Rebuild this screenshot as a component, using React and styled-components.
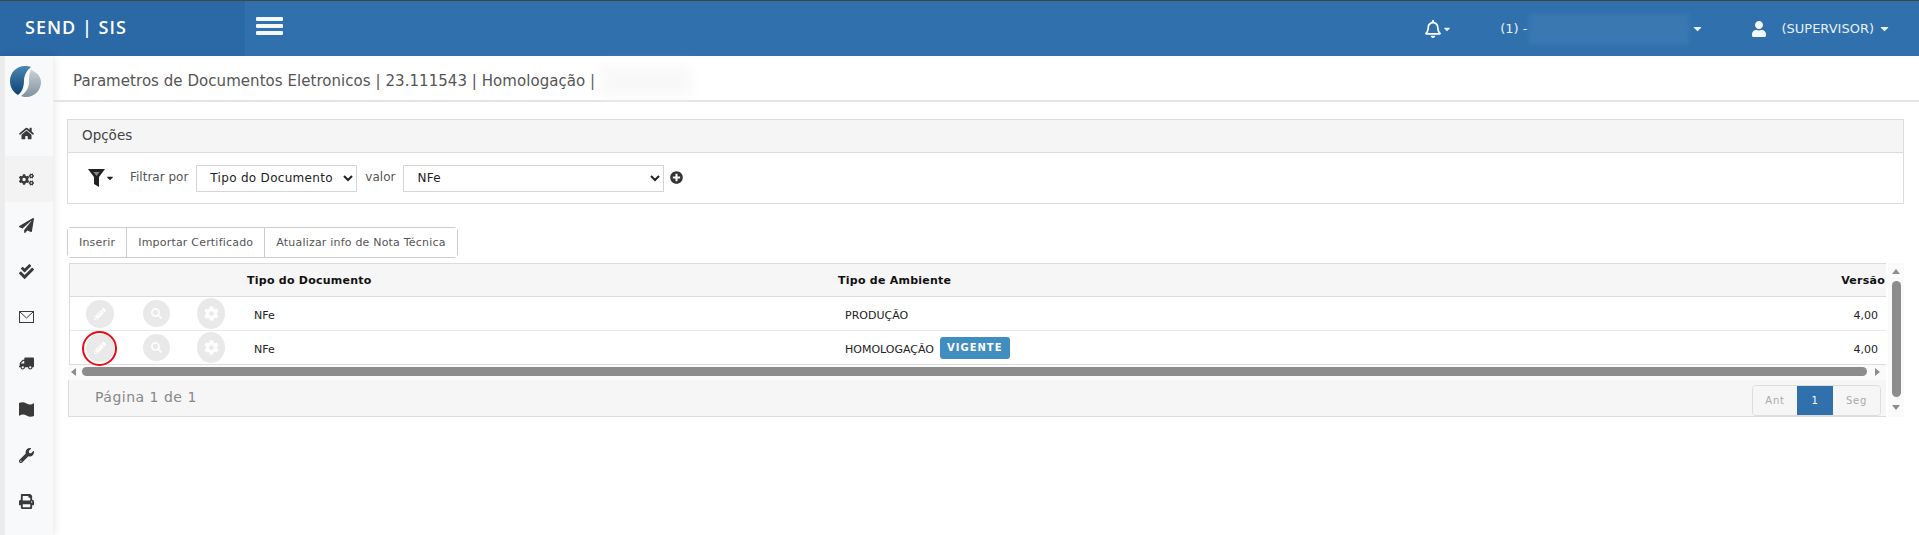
import styled, { createGlobalStyle } from "styled-components";
import {
  FaCaretDown, FaCog, FaCogs, FaHome, FaPaperPlane, FaPencilAlt,
  FaPlusCircle, FaPrint, FaRegBell, FaSearch, FaTruck, FaUser, FaWrench, FaCheckDouble,
} from "react-icons/fa";

const mainBlue = "#3071ad";
const lineColor = "#dcdcdc";
const font = `"DejaVu Sans", "Open Sans", sans-serif`;

const GlobalStyle = createGlobalStyle`
  html, body { margin: 0; height: 535px; overflow: hidden; background: #fff; }
  body { font-family: ${font}; color: #333; }
  * { box-sizing: border-box; }
`;

const Page = styled.div`
  width: 1919px;
  height: 535px;
  display: flex;
  flex-direction: column;
  border-top: 1px solid #444;
`;

const TopBar = styled.header`
  height: 55px;
  flex: none;
  display: flex;
  align-items: center;
  background: ${mainBlue};
  color: #fff;
`;

const Brand = styled.div`
  width: 245px;
  height: 100%;
  padding: 0 0 3px 25px;
  display: flex;
  align-items: center;
  background: #2a69a5;
  font-family: "Open Sans", sans-serif;
  font-size: 18px;
  font-weight: 600;
  letter-spacing: 1px;
  white-space: pre;
`;

const MenuButton = styled.div`
  width: 27px;
  height: 18px;
  margin: 0 0 5px 11px;
  display: flex;
  flex-direction: column;
  justify-content: space-between;
  span { height: 4px; background: #f4f7fb; border-radius: 1px; }
`;

const TopRight = styled.div`
  margin-left: auto;
  display: flex;
  align-items: center;
  font-size: 13px;
  color: #e8eff7;
`;

const TopItem = styled.div`
  display: flex;
  align-items: center;
  margin-left: ${(p) => p.$gap || 0}px;
  margin-right: ${(p) => p.$right || 0}px;
`;

const BlurPatch = styled.div`
  width: ${(p) => p.$w}px;
  height: ${(p) => p.$h}px;
  margin: 0 ${(p) => p.$after}px 0 ${(p) => p.$before}px;
  background: ${(p) => p.$bg};
  filter: blur(2px);
`;

const Caret = styled(FaCaretDown)`
  font-size: ${(p) => p.$size || 13}px;
  margin-left: ${(p) => p.$gap || 0}px;
`;

const RoleLabel = styled.span`
  margin-left: 14px;
`;

const Body = styled.div`
  flex: 1;
  min-height: 0;
  display: flex;
`;

const Sidebar = styled.nav`
  width: 53px;
  flex: none;
  border-left: 5px solid #ececec;
  background: #f8f9fb;
  box-shadow: 2px 0 8px rgba(0, 0, 0, 0.09);
`;

const LogoBox = styled.div`
  height: 54px;
  padding: 10px 7px 0 0;
  display: flex;
  justify-content: center;
`;

const SideItem = styled.div`
  height: 46px;
  padding-right: 6px;
  display: flex;
  align-items: center;
  justify-content: center;
  font-size: 15px;
  color: #3a3a3a;
  background: ${(p) => (p.$active ? "#f3f3f3" : "transparent")};
  svg.flip { transform: scaleX(-1); }
`;

const Main = styled.main`
  flex: 1;
  min-width: 0;
`;

const TitleBar = styled.div`
  height: 46px;
  padding: 6px 0 0 20px;
  display: flex;
  align-items: center;
  border-bottom: 2px solid #e4e4e4;
  font-size: 15px;
  letter-spacing: 0.05px;
  color: #555;
  white-space: nowrap;
`;

const TitlePatch = styled.div`
  width: 90px;
  height: 30px;
  margin-left: 6px;
  background: #f8f8f8;
  filter: blur(6px);
`;

const Content = styled.div`
  padding: 17px 15px 0 14px;
`;

const OptionsPanel = styled.section`
  height: 85px;
  border: 1px solid ${lineColor};
`;

const OptionsTitle = styled.div`
  height: 33px;
  padding: 0 0 2px 14px;
  display: flex;
  align-items: center;
  background: #f5f5f5;
  border-bottom: 1px solid ${lineColor};
  font-size: 13.5px;
  color: #444;
`;

const FilterRow = styled.div`
  height: 50px;
  padding: 0 0 1px 20px;
  display: flex;
  align-items: center;
  font-size: 12px;
  color: #555;
`;

const FilterIcon = styled.div`
  display: flex;
  align-items: center;
  width: 34px;
  color: #222;
`;

const FieldLabel = styled.span`
  margin: 0 8px;
  padding-bottom: 2px;
`;

const Select = styled.select`
  width: ${(p) => p.$w}px;
  height: 27px;
  margin-top: 1px;
  padding-left: 9px;
  background: #fff;
  border: 1px solid #d4d4d4;
  border-radius: 0;
  font-family: ${font};
  font-size: 12px;
  letter-spacing: 0.3px;
  color: #222;
`;

const AddIcon = styled(FaPlusCircle)`
  margin-left: 6px;
  font-size: 13px;
  color: #333;
`;

const ButtonGroup = styled.div`
  width: max-content;
  height: 31px;
  margin-top: 23px;
  display: flex;
  border: 1px solid #ccc;
  border-radius: 4px;
`;

const GroupButton = styled.button`
  padding: 0 ${(p) => p.$pad}px;
  border: none;
  border-left: ${(p) => (p.$first ? "none" : "1px solid #ccc")};
  background: #fff;
  font-family: ${font};
  font-size: 11px;
  letter-spacing: 0.2px;
  color: #555;
`;

const GridArea = styled.div`
  margin-top: 5px;
  display: flex;
`;

const GridLeft = styled.div`
  flex: 1;
  min-width: 0;
`;

const Table = styled.div`
  margin-left: 2px;
  border: 1px solid ${lineColor};
  border-right: none;
  border-bottom: none;
`;

const Row = styled.div`
  height: ${(p) => (p.$head ? 33 : 34)}px;
  display: grid;
  grid-template-columns: 164px 604px 1fr 200px;
  align-items: center;
  background: ${(p) => (p.$head ? "#f6f6f6" : "#fff")};
  border-bottom: 1px solid ${(p) => (p.$last || p.$head ? "#dcdcdc" : "#e8e8e8")};
  font-size: 11px;
  font-weight: ${(p) => (p.$head ? 700 : 400)};
  letter-spacing: ${(p) => (p.$head ? 0.25 : 0)}px;
  color: ${(p) => (p.$head ? "#111" : "#222")};
`;

const RowActions = styled.div`
  position: relative;
  height: 100%;
  display: flex;
  align-items: center;
  padding-left: 16px;
`;

const ActionIcon = styled.span`
  width: ${(p) => p.$size}px;
  height: ${(p) => p.$size + (p.$tall ? 3 : 0)}px;
  margin-right: ${(p) => p.$after}px;
  display: flex;
  align-items: center;
  justify-content: center;
  border-radius: 50%;
  background: #e9e9e9;
  color: #fdfdfd;
  font-size: ${(p) => p.$icon}px;
`;

const RedRing = styled.span`
  position: absolute;
  left: 12px;
  top: 0;
  width: 35px;
  height: 35px;
  border: 2px solid #ee0a12;
  border-radius: 50%;
`;

const Cell = styled.div`
  display: flex;
  align-items: center;
  padding-left: ${(p) => p.$pad || 0}px;
  padding-right: ${(p) => p.$padRight || 0}px;
  padding-top: ${(p) => (p.$body ? 4 : 0)}px;
  justify-content: ${(p) => (p.$right ? "flex-end" : "flex-start")};
  white-space: nowrap;
`;

const Badge = styled.span`
  height: 22px;
  margin: -4px 0 0 6px;
  padding: 0 7px;
  display: inline-flex;
  align-items: center;
  background: #3f8ebf;
  border-radius: 3px;
  color: #fff;
  font-size: 10px;
  font-weight: 700;
  letter-spacing: 1px;
`;

const HScroll = styled.div`
  height: 15px;
  margin-left: 1px;
  padding-bottom: 2px;
  display: flex;
  align-items: center;
  background: #fafafa;
`;

const ScrollTrack = styled.div`
  flex: 1;
  height: 9px;
  margin: 0 8px 0 6px;
  background: #8c8c8c;
  border-radius: 5px;
`;

const Arrow = styled.span`
  width: 0;
  height: 0;
  flex: none;
  margin-left: ${(p) => p.$left || 0}px;
  margin-right: ${(p) => p.$right || 0}px;
  border-top: 4px solid transparent;
  border-bottom: 4px solid transparent;
  border-right: ${(p) => (p.$dir === "left" ? "5px solid #8c8c8c" : "none")};
  border-left: ${(p) => (p.$dir === "right" ? "5px solid #8c8c8c" : "none")};
`;

const Footer = styled.div`
  height: 37px;
  padding: 0 5px 0 26px;
  margin-left: 1px;
  display: flex;
  justify-content: space-between;
  background: #f6f6f6;
  border: 1px solid ${lineColor};
  border-top: none;
  border-right: none;
  font-size: 14px;
  letter-spacing: 0.5px;
  color: #888;
`;

const PageInfo = styled.span`
  padding-top: 9px;
`;

const Pager = styled.div`
  height: 31px;
  margin-top: 5px;
  display: flex;
  border: 1px solid #ddd;
  border-radius: 4px;
  overflow: hidden;
  font-size: 10px;
  letter-spacing: 0.8px;
`;

const PageLink = styled.span`
  width: ${(p) => p.$w}px;
  display: flex;
  align-items: center;
  justify-content: center;
  background: ${(p) => (p.$on ? mainBlue : "#f6f6f6")};
  color: ${(p) => (p.$on ? "#fff" : "#aaa")};
`;

const VScroll = styled.div`
  width: 16px;
  flex: none;
  height: 154px;
  margin-left: 2px;
  padding: 6px 0 7px;
  display: flex;
  flex-direction: column;
  align-items: center;
  justify-content: space-between;
  background: #fafafa;
`;

const VThumb = styled.div`
  width: 9px;
  flex: 1;
  margin: 7px 0 8px;
  background: #8c8c8c;
  border-radius: 5px;
`;

const VArrow = styled.span`
  width: 0;
  height: 0;
  border-left: 4px solid transparent;
  border-right: 4px solid transparent;
  border-bottom: ${(p) => (p.$up ? "5px solid #8c8c8c" : "none")};
  border-top: ${(p) => (p.$up ? "none" : "5px solid #8c8c8c")};
`;

const rows = [
  { ambiente: "PRODUÇÃO" },
  { ambiente: "HOMOLOGAÇÃO", vigente: true },
];

const Logo = () => (
  <svg width="31" height="31" viewBox="0 0 31 31">
    <defs>
      <linearGradient id="lb" x1="0" y1="0" x2="0" y2="1">
        <stop offset="0" stopColor="#4a86b5" />
        <stop offset="1" stopColor="#0c426f" />
      </linearGradient>
      <linearGradient id="lg" x1="0" y1="0" x2="0" y2="1">
        <stop offset="0" stopColor="#c8d0d5" />
        <stop offset="1" stopColor="#7f929e" />
      </linearGradient>
    </defs>
    <path d="M15 0C6 0 0 7 0 15c0 6 3 11 8 14 3-2 6-7 6-14 0-6 3-11 7-14-2-1-4-1-6-1z" fill="url(#lb)" />
    <path d="M21 4c5 2 10 6 10 12 0 8-6 15-15 15-2 0-4-.5-5-1 4-3 8-7 8-14 0-5 0-9 2-12z" fill="url(#lg)" />
  </svg>
);

// o mapa da barra lateral nao tem divisoes, so o contorno ondulado
const MapIcon = () => (
  <svg width="15" height="15" viewBox="0 0 15 15">
    <path d="M0 1c2.500-1 5-1 7.500 .5s5 1.500 7.500-.5v13c-2.500 1-5 1-7.500-.5s-5-1.500-7.500 .5z" fill="#3a3a3a" />
  </svg>
);

const EnvelopeIcon = () => (
  <svg width="15" height="12" viewBox="0 0 15 12" fill="none" stroke="#3a3a3a">
    <rect x="0.500" y="0.500" width="14" height="11" />
    <path d="M1 1l6.500 6 6.500-6" />
  </svg>
);

const FunnelIcon = () => (
  <svg width="17" height="18" viewBox="0 0 17 18">
    <path d="M0 0h17l-6 8v10l-5-3V8z" fill="#222" />
    <path d="M5.500 3h6l-3 4z" fill="#8a8a8a" />
  </svg>
);

const TruckIcon = () => <FaTruck className="flip" />;

const sideIcons = [FaHome, FaCogs, FaPaperPlane, FaCheckDouble, EnvelopeIcon, TruckIcon, MapIcon, FaWrench, FaPrint];

export default function App() {
  return (
    <Page>
      <GlobalStyle />
      <TopBar>
        <Brand>SEND | SIS</Brand>
        <MenuButton><span /><span /><span /></MenuButton>
        <TopRight>
          <TopItem>
            <FaRegBell size={18} color="#fff" />
            <Caret $size={10} />
          </TopItem>
          <TopItem $gap={48}>
            (1) -
            <BlurPatch $w={160} $h={30} $before={2} $after={2} $bg="#3a78b2" />
            <Caret />
          </TopItem>
          <TopItem $gap={47} $right={28}>
            <FaUser size={16} color="#f4f7fb" />
            <RoleLabel>(SUPERVISOR)</RoleLabel>
            <Caret $gap={4} />
          </TopItem>
        </TopRight>
      </TopBar>
      <Body>
        <Sidebar>
          <LogoBox><Logo /></LogoBox>
          {sideIcons.map((Icon, i) => (
            <SideItem key={i} $active={i === 1}><Icon /></SideItem>
          ))}
        </Sidebar>
        <Main>
          <TitleBar>
            Parametros de Documentos Eletronicos | 23.111543 | Homologação |
            <TitlePatch />
          </TitleBar>
          <Content>
            <OptionsPanel>
              <OptionsTitle>Opções</OptionsTitle>
              <FilterRow>
                <FilterIcon><FunnelIcon /><Caret $size={10} /></FilterIcon>
                <FieldLabel>Filtrar por</FieldLabel>
                <Select $w={161} defaultValue="tipo">
                  <option value="tipo">Tipo do Documento</option>
                </Select>
                <FieldLabel>valor</FieldLabel>
                <Select $w={261} defaultValue="nfe">
                  <option value="nfe">NFe</option>
                </Select>
                <AddIcon />
              </FilterRow>
            </OptionsPanel>
            <ButtonGroup>
              <GroupButton $first $pad={11}>Inserir</GroupButton>
              <GroupButton $pad={11}>Importar Certificado</GroupButton>
              <GroupButton $pad={11}>Atualizar info de Nota Técnica</GroupButton>
            </ButtonGroup>
            <GridArea>
              <GridLeft>
                <Table>
                  <Row $head>
                    <span />
                    <Cell $pad={13}>Tipo do Documento</Cell>
                    <Cell>Tipo de Ambiente</Cell>
                    <Cell $right $padRight={1}>Versão</Cell>
                  </Row>
                  {rows.map((row, i) => (
                    <Row key={row.ambiente} $last={i === rows.length - 1}>
                      <RowActions>
                        <ActionIcon $size={28} $after={29} $icon={12}><FaPencilAlt /></ActionIcon>
                        <ActionIcon $size={27} $after={27} $icon={11}><FaSearch /></ActionIcon>
                        <ActionIcon $size={28} $tall $after={0} $icon={15}><FaCog /></ActionIcon>
                        {row.vigente && <RedRing />}
                      </RowActions>
                      <Cell $body $pad={20}>NFe</Cell>
                      <Cell $body $pad={7}>
                        {row.ambiente}
                        {row.vigente && <Badge>VIGENTE</Badge>}
                      </Cell>
                      <Cell $body $right $padRight={8}>4,00</Cell>
                    </Row>
                  ))}
                </Table>
                <HScroll>
                  <Arrow $dir="left" $left={3} />
                  <ScrollTrack />
                  <Arrow $dir="right" $right={6} />
                </HScroll>
                <Footer>
                  <PageInfo>Página 1 de 1</PageInfo>
                  <Pager>
                    <PageLink $w={44}>Ant</PageLink>
                    <PageLink $w={36} $on>1</PageLink>
                    <PageLink $w={47}>Seg</PageLink>
                  </Pager>
                </Footer>
              </GridLeft>
              <VScroll>
                <VArrow $up />
                <VThumb />
                <VArrow />
              </VScroll>
            </GridArea>
          </Content>
        </Main>
      </Body>
    </Page>
  );
}
